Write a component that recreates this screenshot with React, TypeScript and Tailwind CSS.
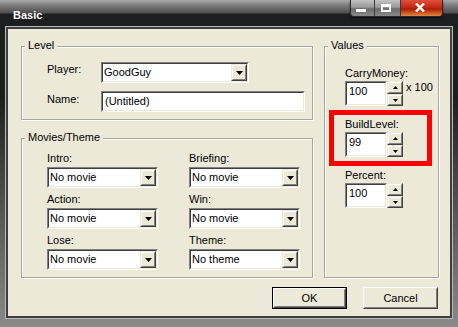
import React from "react";

function Arrow({ up = false, small = false }: { up?: boolean; small?: boolean }) {
  const w = small ? 5 : 7;
  const h = small ? 3 : 4;
  return (
    <svg width={w} height={h} viewBox={`0 0 ${w} ${h}`} className="block">
      {up ? (
        <polygon points={`0,${h} ${w},${h} ${w / 2},0`} fill="#000" />
      ) : (
        <polygon points={`0,0 ${w},0 ${w / 2},${h}`} fill="#000" />
      )}
    </svg>
  );
}

function Raised({ className = "", children }: { className?: string; children?: React.ReactNode }) {
  return (
    <div className={`shrink-0 border border-t-[#ece9d8] border-l-[#ece9d8] border-b-[#404040] border-r-[#404040] bg-[#ece9d8] ${className}`}>
      <div className="w-full h-full border border-t-white border-l-white border-b-[#808080] border-r-[#808080] flex items-center justify-center">
        {children}
      </div>
    </div>
  );
}

function Combo({ text, className = "" }: { text: string; className?: string }) {
  return (
    <div className={`shrink-0 h-[21px] border border-t-[#808080] border-l-[#808080] border-b-white border-r-white ${className}`}>
      <div className="h-full border border-t-[#404040] border-l-[#404040] border-b-[#ece9d8] border-r-[#ece9d8] bg-white flex">
        <div className="flex-1 min-w-0 flex items-center pl-[1px] overflow-hidden whitespace-nowrap">{text}</div>
        <Raised className="w-[16px] h-full">
          <Arrow />
        </Raised>
      </div>
    </div>
  );
}

function TextField({ text, className = "" }: { text: string; className?: string }) {
  return (
    <div className={`shrink-0 h-[21px] border border-t-[#808080] border-l-[#808080] border-b-white border-r-white ${className}`}>
      <div className="h-full border border-t-[#404040] border-l-[#404040] border-b-[#ece9d8] border-r-[#ece9d8] bg-white flex items-center pl-[2px]">
        {text}
      </div>
    </div>
  );
}

function Spin({ value, suffix }: { value: string; suffix?: string }) {
  return (
    <div className="flex mt-[1px]">
      <div className="shrink-0 w-[42px] h-[25px] border border-t-[#808080] border-l-[#808080] border-b-white border-r-white">
        <div className="h-full border border-t-[#404040] border-l-[#404040] border-b-[#ece9d8] border-r-[#ece9d8] bg-white pl-[2px] pt-[2px]">
          {value}
        </div>
      </div>
      <div className="shrink-0 flex flex-col w-[16px] h-[25px]">
        <Raised className="h-[13px] w-full">
          <Arrow up small />
        </Raised>
        <Raised className="h-[12px] w-full">
          <Arrow small />
        </Raised>
      </div>
      {suffix && <div className="ml-[3px] self-start whitespace-nowrap">{suffix}</div>}
    </div>
  );
}

function Group({ title, className = "", children }: { title: string; className?: string; children?: React.ReactNode }) {
  return (
    <div className={`relative border border-[#aca899] shadow-[inset_1px_1px_0_#fff,1px_1px_0_#fff] ${className}`}>
      <span className="absolute left-[3px] top-[-8px] px-[3px] bg-[#ece9d8]">{title}</span>
      {children}
    </div>
  );
}

function Field({ label, children }: { label: string; children: React.ReactNode }) {
  return (
    <div className="flex flex-col">
      <div>{label}</div>
      <div className="mt-[2px]">{children}</div>
    </div>
  );
}

export default function App() {
  return (
    <div className="w-[458px] h-[327px] flex flex-col overflow-hidden bg-[linear-gradient(to_bottom,#1d1e20_0%,#1d1e20_30%,#4e4e4e_60%,#8a8a8a_100%)] font-['Liberation_Sans',Arial,sans-serif] text-[11px] leading-[13px] text-black">
      {/* title bar */}
      <div className="h-[27px] flex items-start shrink-0 bg-[linear-gradient(to_bottom,#a9a9a9_0px,#777_6px,#4f4f4f_13px,#1d1e20_14px,#1d1e20_100%)]">
        <div className="pl-[13px] pt-[9px] text-white font-bold text-[11px]">Basic</div>
        <div className="ml-auto mr-[15px] flex h-[17px] rounded-b-[4px] border border-t-0 border-[#2a2a2a] shadow-[0_1px_2px_rgba(0,0,0,0.6)] overflow-hidden">
          <div className="w-[24px] h-full flex justify-center items-start pt-[9px] bg-[linear-gradient(to_bottom,#c2c2c2_0%,#9a9a9a_45%,#6c6c6c_55%,#8a8a8a_100%)] border-r border-[#3a3a3a]">
            <div className="w-[10px] h-[3px] bg-white mr-[3px] shadow-[0_0_1px_#333]" />
          </div>
          <div className="w-[26px] h-full flex justify-center items-start pt-[4px] bg-[linear-gradient(to_bottom,#c2c2c2_0%,#9a9a9a_45%,#6c6c6c_55%,#8a8a8a_100%)] border-r border-[#3a3a3a]">
            <div className="w-[10px] h-[8px] border-2 border-t-[3px] border-white mr-[4px]" />
          </div>
          <div className="w-[41px] h-full flex justify-center items-start pt-[3px] bg-[linear-gradient(to_bottom,#e0503a_0%,#c42a14_45%,#a81c08_55%,#e8863a_100%)]">
            <svg width="10" height="9" viewBox="0 0 10 9" className="mr-[3px]">
              <path d="M1 0.5 L9 8.5 M9 0.5 L1 8.5" stroke="#fff" strokeWidth="2.4" />
            </svg>
          </div>
        </div>
      </div>

      {/* dialog body */}
      <div className="flex-1 mx-[6px] mb-[9px] border-2 border-[#3f3f3f] shadow-[0_0_0_1px_#b9b9b9] bg-[#ece9d8] flex flex-col pt-[17px] pl-[13px] pr-[11px]">
        <div className="flex gap-[11px] h-[232px]">
          <div className="w-[292px] shrink-0 flex flex-col">
            <Group title="Level" className="h-[74px] pt-[15px] pl-[25px]">
              <div className="grid grid-cols-[54px_204px] gap-y-[8px] items-start">
                <div className="pt-[1px]">Player:</div>
                <div className="w-[148px] justify-self-start">
                  <Combo text="GoodGuy" className="w-[148px]" />
                </div>
                <div className="pt-[2px]">Name:</div>
                <TextField text="(Untitled)" className="w-[204px]" />
              </div>
            </Group>
            <Group title="Movies/Theme" className="mt-[18px] h-[140px] pt-[13px] pl-[25px]">
              <div className="grid grid-cols-[111px_111px] gap-x-[31px] gap-y-[5px]">
                <Field label="Intro:"><Combo text="No movie" className="w-[111px]" /></Field>
                <Field label="Briefing:"><Combo text="No movie" className="w-[111px]" /></Field>
                <Field label="Action:"><Combo text="No movie" className="w-[111px]" /></Field>
                <Field label="Win:"><Combo text="No movie" className="w-[111px]" /></Field>
                <Field label="Lose:"><Combo text="No movie" className="w-[111px]" /></Field>
                <Field label="Theme:"><Combo text="No theme" className="w-[111px]" /></Field>
              </div>
            </Group>
          </div>
          <Group title="Values" className="w-[115px] shrink-0 h-[232px] pt-[20px] pl-[20px]">
            <div className="flex flex-col gap-[12px]">
              <div>
                <div>CarryMoney:</div>
                <Spin value="100" suffix="x 100" />
              </div>
              <div>
                <div>BuildLevel:</div>
                <Spin value="99" />
              </div>
              <div>
                <div>Percent:</div>
                <Spin value="100" />
              </div>
            </div>
            <div className="absolute left-[4px] top-[63px] w-[103px] h-[56px] border-[5px] border-[#ff0000]" />
          </Group>
        </div>

        <div className="flex justify-end gap-[16px] mt-[9px] mr-[1px]">
          <div className="w-[75px] h-[22px] border border-black">
            <div className="w-full h-full border border-t-white border-l-white border-b-[#404040] border-r-[#404040]">
              <div className="w-full h-full border border-t-[#ece9d8] border-l-[#ece9d8] border-b-[#808080] border-r-[#808080] flex items-center justify-center">
                OK
              </div>
            </div>
          </div>
          <div className="w-[75px] h-[22px] border border-t-white border-l-white border-b-[#404040] border-r-[#404040]">
            <div className="w-full h-full border border-t-[#ece9d8] border-l-[#ece9d8] border-b-[#808080] border-r-[#808080] flex items-center justify-center">
              Cancel
            </div>
          </div>
        </div>
      </div>
    </div>
  );
}
